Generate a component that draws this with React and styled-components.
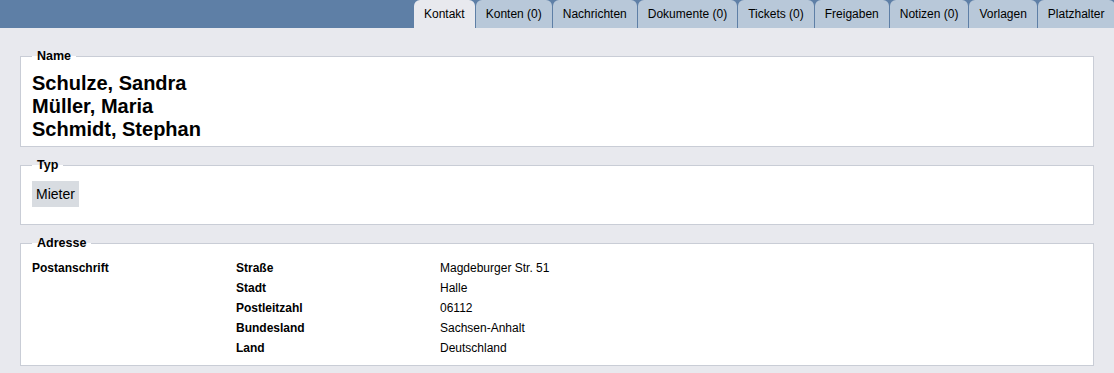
import styled, { createGlobalStyle } from "styled-components";

const GlobalStyle = createGlobalStyle`
 html, body {
  margin: 0;
  padding: 0;
  background: #e8e9ee;
  font-family: "Liberation Sans", Arial, Helvetica, sans-serif;
  color: #000;
 }
`;

const tabs = [
 "Kontakt",
 "Konten (0)",
 "Nachrichten",
 "Dokumente (0)",
 "Tickets (0)",
 "Freigaben",
 "Notizen (0)",
 "Vorlagen",
 "Platzhalter",
];

const names = ["Schulze, Sandra", "Müller, Maria", "Schmidt, Stephan"];

const address = [
 ["Straße", "Magdeburger Str. 51"],
 ["Stadt", "Halle"],
 ["Postleitzahl", "06112"],
 ["Bundesland", "Sachsen-Anhalt"],
 ["Land", "Deutschland"],
];

function App() {
 return (
  <>
   <GlobalStyle />
   <Header>
    <TabList>
     {tabs.map((tab, index) => (
      <Tab key={tab} $active={index === 0}>
       {tab}
      </Tab>
     ))}
    </TabList>
   </Header>

   <Content>
    <Box $top={9} $bottom={5}>
     <Legend>Name</Legend>
     {names.map((name) => (
      <BigName key={name}>{name}</BigName>
     ))}
    </Box>

    <Box $bottom={17}>
     <Legend>Typ</Legend>
     <Chip>Mieter</Chip>
    </Box>

    <Box>
     <Legend>Adresse</Legend>
     <AddressGrid>
      <Label>Postanschrift</Label>
      <div>
       {address.map(([label, value]) => (
        <Row key={label}>
         <Label>{label}</Label>
         <Value>{value}</Value>
        </Row>
       ))}
      </div>
     </AddressGrid>
    </Box>
   </Content>
  </>
 );
}

export default App;

const Header = styled.header`
 height: 28px;
 background-color: #5e7fa6;
 overflow: hidden;
`;

const TabList = styled.nav`
 display: flex;
 height: 100%;
 margin-left: 414px;
 white-space: nowrap;
`;

const Tab = styled.div`
 flex: 0 0 auto;
 height: 28px;
 line-height: 28px;
 padding: 0 10px;
 margin-right: 1px;
 font-size: 12px;
 border-radius: 6px 6px 0 0;
 background-color: ${(p) => (p.$active ? "#e8e9ee" : "#b8c8d9")};
 cursor: pointer;
`;

const Content = styled.main`
 display: flex;
 flex-direction: column;
 gap: 11px;
 padding: 21px 20px 8px;
`;

const Box = styled.fieldset`
 margin: 0;
 min-width: 0;
 padding: ${(p) => p.$top || 7}px 11px ${(p) => p.$bottom || 7}px;
 border: 1px solid #c9cdd6;
 background-color: #fff;
`;

const Legend = styled.legend`
 padding: 0 5px;
 font-size: 12.5px;
 line-height: 14px;
 font-weight: bold;
`;

const BigName = styled.div`
 font-size: 20px;
 line-height: 23px;
 font-weight: bold;
`;

const Chip = styled.span`
 display: inline-block;
 margin-top: 2px;
 padding: 5px 4px;
 font-size: 14px;
 line-height: 16px;
 background-color: #d8dce1;
`;

const AddressGrid = styled.div`
 display: grid;
 grid-template-columns: 204px 1fr;
 padding-top: 1px;
 font-size: 12px;
`;

const Row = styled.div`
 display: grid;
 grid-template-columns: 204px 1fr;
 line-height: 20px;
`;

const Label = styled.div`
 font-weight: bold;
 line-height: 20px;
`;

const Value = styled.div``;
